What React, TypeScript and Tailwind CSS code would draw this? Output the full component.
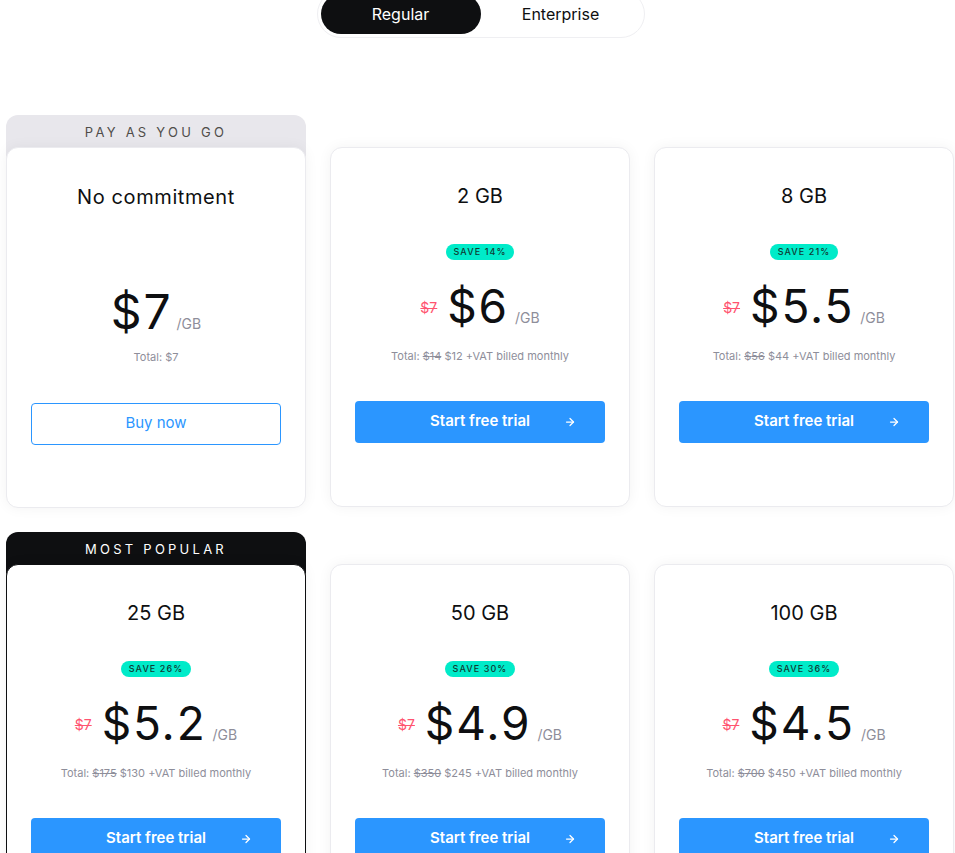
import { ArrowRight } from 'lucide-react'

interface Plan {
  title: string
  price: string
  save?: string
  oldTotal?: string
  total: string
}

const plans: Plan[] = [
  { title: '2 GB', price: '6', save: '14', oldTotal: '14', total: '12' },
  { title: '8 GB', price: '5.5', save: '21', oldTotal: '56', total: '44' },
  { title: '25 GB', price: '5.2', save: '26', oldTotal: '175', total: '130' },
  { title: '50 GB', price: '4.9', save: '30', oldTotal: '350', total: '245' },
  { title: '100 GB', price: '4.5', save: '36', oldTotal: '700', total: '450' },
]

function TrialCard({ plan, popular }: { plan: Plan; popular?: boolean }) {
  return (
    <div
      className={`relative h-[360px] bg-white rounded-xl flex flex-col items-center px-6 pt-[34px] shadow-[0_0_14px_rgba(0,0,0,0.05)] border ${
        popular ? 'border-[#0e0f11]' : 'border-[#ebebef]'
      }`}
    >
      <h3 className="text-[20px] leading-7 text-[#0e0f11]">{plan.title}</h3>
      <span className="mt-[34px] h-4 px-2 rounded-full bg-[#00ebc9] text-[9px] leading-4 tracking-[0.12em] text-[#103a33] font-medium">
        SAVE {plan.save}%
      </span>
      <div className="mt-[16px] flex items-baseline gap-2">
        <span className="relative -top-[10px] mr-[2px] text-[14px] text-[#ff5470] line-through">$7</span>
        <span className="text-[46px] leading-[60px] text-[#0e0f11] tracking-[0.04em]">${plan.price}</span>
        <span className="-ml-[2px] text-[14px] text-[#8e8e9a]">/GB</span>
      </div>
      <p className="mt-[12px] text-[11px] text-[#8e8e9a]">
        Total: <span className="line-through">${plan.oldTotal}</span> ${plan.total} +VAT billed monthly
      </p>
      <button className="relative mt-[36px] w-full h-[42px] rounded bg-[#2b96ff] text-white text-[15px] font-semibold">
        Start free trial
        <ArrowRight className="absolute right-[29px] top-[15px] w-3 h-3" strokeWidth={2.5} />
      </button>
    </div>
  )
}

export default function App() {
  return (
    <div className="min-h-screen bg-white font-['Inter',sans-serif] overflow-hidden">
      {/* toggle */}
      <div className="flex justify-center pl-[6px] -mt-[10px]">
        <div className="flex p-[3px] rounded-full border border-[#efeff2] bg-white">
          <button className="w-[160px] h-[40px] rounded-full bg-[#0e0f11] text-white text-[16px]">Regular</button>
          <button className="w-[160px] h-[40px] rounded-full text-[#0e0f11] text-[16px]">Enterprise</button>
        </div>
      </div>

      <div className="mt-[77px] pl-[6px] grid grid-cols-[repeat(3,300px)] gap-x-6 gap-y-6">
        {/* pay as you go */}
        <div className="flex flex-col">
          <div className="h-[44px] rounded-t-xl bg-[#e8e7ec] text-center text-[13px] leading-[34px] tracking-[0.25em] text-[#4f4d4a]">
            PAY AS YOU GO
          </div>
          <div className="-mt-3 h-[361px] bg-white rounded-xl flex flex-col items-center px-6 pt-[35px] border border-[#ebebef] shadow-[0_0_14px_rgba(0,0,0,0.05)]">
            <h3 className="text-[20px] leading-7 tracking-[0.03em] text-[#0e0f11]">No commitment</h3>
            <div className="mt-[71px] flex items-baseline gap-1">
              <span className="text-[48px] leading-[60px] text-[#0e0f11] tracking-[0.04em]">$7</span>
              <span className="text-[14px] text-[#8e8e9a]">/GB</span>
            </div>
            <p className="mt-[7px] text-[11px] text-[#8e8e9a]">Total: $7</p>
            <button className="mt-[37px] w-full h-[42px] rounded border border-[#2b96ff] text-[#2b96ff] text-[15px]">
              Buy now
            </button>
          </div>
        </div>

        {plans.slice(0, 2).map((p) => (
          <div key={p.title} className="flex flex-col pt-8">
            <TrialCard plan={p} />
          </div>
        ))}

        {/* most popular */}
        <div className="flex flex-col">
          <div className="h-[44px] rounded-t-xl bg-[#0e0f11] text-center text-[13px] leading-[34px] tracking-[0.25em] text-white">
            MOST POPULAR
          </div>
          <div className="-mt-3">
            <TrialCard plan={plans[2]} popular />
          </div>
        </div>

        {plans.slice(3).map((p) => (
          <div key={p.title} className="flex flex-col pt-8">
            <TrialCard plan={p} />
          </div>
        ))}
      </div>
    </div>
  )
}
